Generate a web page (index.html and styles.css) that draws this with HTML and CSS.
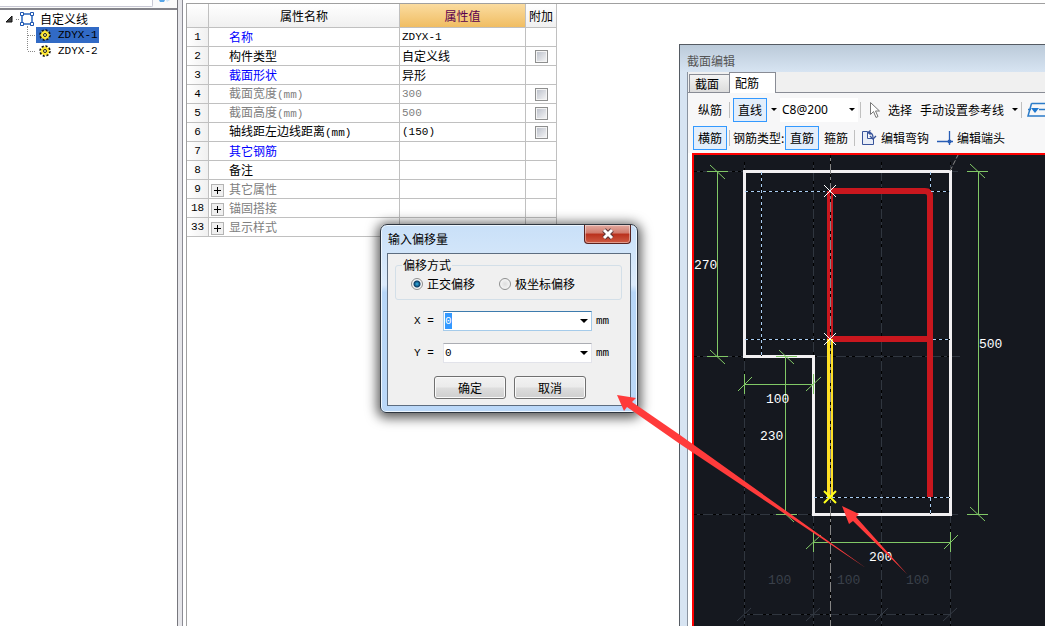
FILE: index.html
```html
<!DOCTYPE html>
<html lang="zh-CN">
<head>
<meta charset="utf-8">
<title>截面编辑</title>
<link rel="stylesheet" href="styles.css">
</head>
<body>
<main class="workspace">
  <aside class="tree-pane">
    <div class="search-strip">
      <div class="search-edge"></div>
      <svg class="search-icon" width="14" height="3" viewBox="0 0 14 3"><path d="M1 0h6l-1 2H2z" fill="#58a6e8"/><path d="M8 0h4L9 2z" fill="#cfe5f7"/></svg>
    </div>
    <ul class="tree">
      <li class="tree-root">
        <svg width="38" height="16" viewBox="0 0 38 16">
          <path d="M12 5v6H6z" fill="#444" stroke="#111"/>
          <path d="M16 8.500h4M27.500 16v-2" stroke="#888" stroke-dasharray="1 1"/>
          <path d="M22 3h10v10H22z" fill="#fff" stroke="#2865bd" stroke-width="1.500"/>
          <path d="M20.500 1.500h3v3h-3zM30.500 1.500h3v3h-3zM20.500 11.500h3v3h-3zM30.500 11.500h3v3h-3z" fill="#fff" stroke="#1c55b0"/>
        </svg>
        <span>自定义线</span>
      </li>
      <li class="tree-item">
        <svg width="9" height="16" viewBox="0 0 9 16"><path d="M.5 0v16M1 8.500h8" stroke="#888" stroke-dasharray="1 1"/></svg>
        <span class="tree-label selected">
          <svg width="12" height="12" viewBox="0 0 12 12"><circle cx="6" cy="6" r="4.500" fill="none" stroke="#111" stroke-width="2.500" stroke-dasharray="2 1.500"/><circle cx="6" cy="6" r="4" fill="#ffe832"/><path d="M6 1v10M1 6h10M2.500 2.500l7 7M9.500 2.500l-7 7" stroke="#ffe832"/><circle cx="6" cy="6" r="1.500" fill="#fff8a0" stroke="#222"/></svg>
          <span class="latin">ZDYX-1</span>
        </span>
      </li>
      <li class="tree-item">
        <svg width="9" height="16" viewBox="0 0 9 16"><path d="M.5 0v8M1 8.500h8" stroke="#888" stroke-dasharray="1 1"/></svg>
        <span class="tree-label">
          <svg width="12" height="12" viewBox="0 0 12 12"><circle cx="6" cy="6" r="4.500" fill="none" stroke="#111" stroke-width="2.500" stroke-dasharray="2 1.500"/><circle cx="6" cy="6" r="4" fill="#ffe832"/><path d="M6 1v10M1 6h10M2.500 2.500l7 7M9.500 2.500l-7 7" stroke="#ffe832"/><circle cx="6" cy="6" r="1.500" fill="#fff8a0" stroke="#222"/></svg>
          <span class="latin">ZDYX-2</span>
        </span>
      </li>
    </ul>
  </aside>
  <div class="splitter"></div>
  <section class="property-pane">
    <table class="props">
      <colgroup><col class="c-num"><col class="c-name"><col class="c-value"><col class="c-extra"></colgroup>
      <thead><tr><th></th><th>属性名称</th><th class="active">属性值</th><th>附加</th></tr></thead>
      <tbody>
        <tr><th>1</th><td class="name link">名称</td><td class="latin">ZDYX-1</td><td></td></tr>
        <tr><th>2</th><td class="name">构件类型</td><td>自定义线</td><td class="check"><input type="checkbox" aria-label="构件类型 附加"></td></tr>
        <tr><th>3</th><td class="name link">截面形状</td><td>异形</td><td></td></tr>
        <tr class="muted"><th>4</th><td class="name">截面宽度<span class="latin">(mm)</span></td><td class="latin">300</td><td class="check"><input type="checkbox" aria-label="截面宽度 附加"></td></tr>
        <tr class="muted"><th>5</th><td class="name">截面高度<span class="latin">(mm)</span></td><td class="latin">500</td><td class="check"><input type="checkbox" aria-label="截面高度 附加"></td></tr>
        <tr><th>6</th><td class="name">轴线距左边线距离<span class="latin">(mm)</span></td><td class="latin">(150)</td><td class="check"><input type="checkbox" aria-label="轴线距左边线距离 附加"></td></tr>
        <tr><th>7</th><td class="name link">其它钢筋</td><td></td><td></td></tr>
        <tr><th>8</th><td class="name">备注</td><td></td><td></td></tr>
        <tr class="muted"><th>9</th><td class="group"><button class="expand" aria-label="展开"></button>其它属性</td><td></td><td></td></tr>
        <tr class="muted"><th>18</th><td class="group"><button class="expand" aria-label="展开"></button>锚固搭接</td><td></td><td></td></tr>
        <tr class="muted"><th>33</th><td class="group"><button class="expand" aria-label="展开"></button>显示样式</td><td></td><td></td></tr>
      </tbody>
    </table>
  </section>
</main>

<section class="editor">
  <header class="editor-title">截面编辑</header>
  <div class="editor-body">
    <nav class="tabs"><button class="tab">截面</button><button class="tab current">配筋</button></nav>
    <div class="toolbars">
      <div class="toolbar">
        <button class="tool">纵筋</button>
        <i class="sep"></i>
        <button class="tool on">直线</button>
        <button class="drop" aria-label="直线选项"></button>
        <div class="spec"><input type="text" value="C8@200" aria-label="钢筋规格"><button class="drop" aria-label="规格列表"></button></div>
        <i class="sep"></i>
        <button class="tool pick">
          <svg width="12" height="18" viewBox="0 0 12 18"><path d="M1.500 1.500v12l3-3 2.500 6 2-1-2.500-5.500h4z" fill="#fff" stroke="#777"/></svg>选择</button>
        <button class="tool tight">手动设置参考线</button>
        <button class="drop" aria-label="参考线选项"></button>
        <i class="sep"></i>
        <svg class="edge-icon" width="20" height="16" viewBox="0 0 20 16"><path d="M4.500 1.500H18M4.500 1.500L1 14h17M1 7.500h3M12 7.500h6" fill="none" stroke="#2b7bc8" stroke-width="1.500"/><path d="M4 6h8l-4 5z" fill="#1e78d0"/></svg>
      </div>
      <div class="toolbar second">
        <button class="tool on">横筋</button>
        <i class="sep"></i>
        <span class="caption">钢筋类型:</span>
        <button class="tool on">直筋</button>
        <button class="tool tight">箍筋</button>
        <i class="sep"></i>
        <button class="tool with-icon">
          <svg width="16" height="16" viewBox="0 0 16 16"><path d="M1.500 1.500h5v7h6v6h-11z" fill="#e8edf7" stroke="#38549b"/><path d="M7 2.500c3 0 5 2 5 5M9.500 .5L7 2.500l2.500 2M9 6l3 3 3-3" fill="none" stroke="#38549b" stroke-width="1.300"/></svg>编辑弯钩</button>
        <button class="tool with-icon">
          <svg width="16" height="16" viewBox="0 0 16 16"><path d="M0 11.500h16M12.500 1v14" stroke="#285db5" stroke-width="1.300"/><circle cx="12.500" cy="11.500" r="2" fill="#285db5"/></svg>编辑端头</button>
      </div>
    </div>
    <div class="drawing">
      <svg class="cad" aria-label="截面配筋图">
        <g transform="translate(-694 -155)" fill="none">
          <path d="M744.500 162V626M813.500 162V626M881.500 162V626M950.500 162V626M694 171.500H958M694 356.500H960M694 514.500H958M744 614.500H950" stroke="#30363f"/>
          <path d="M744.500 162V626M813.500 162V626M881.500 162V626M950.500 162V626M694 171.500H958M694 356.500H960M694 514.500H958M744 614.500H950" stroke="#000" stroke-dasharray="3 3 3 10"/>
          <path d="M737 621l14-13M806 621l14-13M875 621l13-13M943 621l14-13" stroke="#353b45"/>
          <path d="M744.500 171.500H950.500V514.500H813.500V356.500H744.500Z" stroke="#f2f0f2" stroke-width="3"/>
          <g stroke="#81c866">
            <path d="M717.500 171V356M707 171.500h21M707 356.500h21M710 165l15 14M710 350l15 14"/>
            <path d="M785.500 356V514M776 356.500h21M776 514.500h21M779 350l15 14M779 508l15 14"/>
            <path d="M978.500 171V514M967 171.500h21M967 514.500h21M970 164l15 14M970 507l15 14"/>
            <path d="M744 384.500h70M744.500 374v20M813.500 374v20M738 391l14-14M806 391l15-14"/>
            <path d="M813 542.500h138M813.500 532v20M950.500 532v20M806 549l15-14M944 549l14-14"/>
          </g>
          <path d="M830 191V339" stroke="#c9171e" stroke-width="6"/>
          <path d="M830 191H925Q930 191 930 196V497M830 339H930" stroke="#c9171e" stroke-width="6"/>
          <path d="M830 339V497" stroke="#ffdf24" stroke-width="6"/>
          <path d="M830.500 155V626" stroke="#858585"/>
          <path d="M830.500 155V626" stroke="#000" stroke-dasharray="3 3 3 10"/>
          <path d="M950 171l8-16" stroke="#888" stroke-dasharray="5 2"/>
          <path d="M761.500 172V356M745 191.500H825M745 339.500H825M933 339.500H950M931 191.500H950M930.500 172V190M814 497.500H950M930.500 498V514" stroke="#000"/>
          <path d="M761.500 172V356M745 191.500H825M745 339.500H825M933 339.500H950M931 191.500H950M930.500 172V190M814 497.500H950M930.500 498V514" stroke="#a9cdf2" stroke-dasharray="3 3"/>
          <path d="M824 185l12 12M836 185l-12 12M824 333l12 12M836 333l-12 12" stroke="#fff"/>
          <path d="M824 491l12 12M836 491l-12 12" stroke="#ffff1a" stroke-width="2"/>
          <g class="dims">
            <text x="694" y="269">270</text><text x="979" y="348">500</text>
            <text x="766" y="403">100</text><text x="760" y="440">230</text><text x="869" y="561">200</text>
          </g>
          <g class="dims faint">
            <text x="768" y="584">100</text><text x="837" y="584">100</text><text x="906" y="584">100</text>
          </g>
        </g>
      </svg>
    </div>
  </div>
</section>

<form class="dialog">
  <header class="dialog-title">
    <span>输入偏移量</span>
    <button type="button" class="close" aria-label="关闭"><svg width="14" height="12" viewBox="0 0 14 12"><path d="M3 2l8 8M11 2l-8 8" stroke="#5c3638" stroke-width="5"/><path d="M3 2l8 8M11 2l-8 8" stroke="#fff" stroke-width="3"/></svg></button>
  </header>
  <div class="dialog-body">
    <fieldset class="mode">
      <legend>偏移方式</legend>
      <label><input type="radio" name="mode" checked>正交偏移</label>
      <label><input type="radio" name="mode">极坐标偏移</label>
    </fieldset>
    <div class="field">
      <label class="latin" for="dx">X =</label>
      <div class="combo focused"><input id="dx" type="text" value="0"><button type="button" class="drop" aria-label="X 列表"></button></div>
      <span class="latin">mm</span>
    </div>
    <div class="field">
      <label class="latin" for="dy">Y =</label>
      <div class="combo"><input id="dy" type="text" value="0"><button type="button" class="drop" aria-label="Y 列表"></button></div>
      <span class="latin">mm</span>
    </div>
    <div class="actions"><button type="button">确定</button><button type="button">取消</button></div>
  </div>
</form>

<svg class="arrows" aria-hidden="true">
  <path d="M617 395L636 398L632 402L680 435L866 568L680 444L627 407L624 411Z" fill="#ff3b3b"/>
  <path d="M842 506L859 514L856 517L907 574L853 521L849 524Z" fill="#ff3b3b"/>
</svg>
<script src="app.js"></script>
</body>
</html>
```
FILE: styles.css
```css
* { box-sizing: border-box; }

body {
  margin: 0;
  height: 100vh;
  position: relative;
  overflow: hidden;
  background: #fff;
  color: #000;
  font: 12px/16px "Noto Sans CJK SC", sans-serif;
}

button, input {
  font: inherit;
  color: inherit;
  margin: 0;
  padding: 0;
  border: 0;
  background: none;
}

svg { display: block; flex: none; }

.latin { font-family: "Liberation Mono", monospace; font-size: 11px; }

/* Component tree and property grid */
.workspace { display: flex; height: 100%; }

.tree-pane {
  width: 178px;
  flex: none;
  border-right: 1px solid #77777d;
}

.search-strip {
  display: flex;
  gap: 5px;
  height: 10px;
  border-bottom: 2px solid #84848a;
  background: #fafafa;
}

.search-edge {
  width: 153px;
  height: 7px;
  border: solid #c8c8d4;
  border-width: 0 1px 1px 0;
  border-radius: 0 0 2px 0;
  background: #fff;
}

.tree { margin: 1px 0 0; padding: 0; list-style: none; }
.tree-root, .tree-item { display: flex; align-items: center; height: 16px; }
.tree-root { gap: 2px; }
.tree-item { padding-left: 27px; }
.tree-label { display: flex; align-items: center; gap: 7px; height: 16px; padding: 0 1px 0 3px; }
.selected { background: #316ac5; }

.splitter {
  width: 5px;
  flex: none;
  background: #e6e6ea;
  border-right: 1px solid #8c8c94;
}

.property-pane {
  flex: 1;
  margin: 3px 0 0 3px;
  border: solid #a0a0a0;
  border-width: 1px 0 0 1px;
}

.props { width: 370px; table-layout: fixed; border-collapse: separate; border-spacing: 0; }
.c-num { width: 22px; }
.c-name { width: 191px; }
.c-value { width: 126px; }
.c-extra { width: 31px; }

.props th, .props td {
  height: 19px;
  padding: 0 2px;
  border: solid #c0c0c0;
  border-width: 0 1px 1px 0;
  font-weight: normal;
  line-height: 16px;
  text-align: left;
  white-space: nowrap;
}
.props th { background: linear-gradient(90deg, #fff, #f0f0f0); text-align: center; padding: 0; }
.props tbody th { font: 11px/16px "Liberation Mono", monospace; color: #000; }
.props thead th { height: 24px; background: linear-gradient(#fff, #f0f0f0); }
.props thead .active { background: linear-gradient(#fbdca0, #f0bd62); color: #5a004e; }
.props .name { padding-left: 20px; }
.props .link { color: #00f; }
.props .muted { color: #808080; }
.props .check { text-align: center; padding: 0; }

.check input {
  appearance: none;
  display: block;
  width: 13px;
  height: 13px;
  margin: 0 auto;
  border: 1px solid #8e8f8f;
  background: linear-gradient(135deg, #b8bdc8, #f8f8f8);
  box-shadow: inset 0 0 0 1px #f4f4f4;
}

.expand {
  width: 13px;
  height: 13px;
  margin-right: 5px;
  vertical-align: -2px;
  border: 1px solid #b4b4b4;
  background:
    linear-gradient(#000, #000) center / 7px 1px no-repeat,
    linear-gradient(#000, #000) center / 1px 7px no-repeat,
    #f0f0f0;
}

/* Section editor window */
.editor {
  position: absolute;
  left: 679px;
  top: 44px;
  right: 0;
  bottom: 0;
  display: flex;
  flex-direction: column;
  border: solid #555b63;
  border-width: 1px 0 0 1px;
  background: #d7e4f2;
}

.editor-title {
  height: 27px;
  padding: 8px 7px 0;
  background: linear-gradient(#bbcad9, #d7e4f2);
  color: #555;
}

.editor-body {
  flex: 1;
  display: flex;
  flex-direction: column;
  margin-left: 7px;
  border-left: 1px solid #8a93a0;
  background: #fff;
}

.tabs {
  display: flex;
  align-items: flex-end;
  height: 21px;
  padding-left: 1px;
  background: #f0f0f0;
  border-bottom: 1px solid #898c95;
}
.tab {
  width: 40px;
  height: 18px;
  padding-left: 5px;
  border: solid #898c95;
  border-width: 1px 0 0 1px;
  background: linear-gradient(#f4f4f4, #dcdcdc);
  text-align: left;
}
.current { width: 47px; height: 21px; border-width: 1px 1px 0; background: #fff; margin-bottom: -1px; }

.toolbars { padding: 2px 0 0 5px; background: #f7f7f8; }
.toolbar { display: flex; align-items: center; height: 29px; gap: 2px; overflow: hidden; }
.second { padding-bottom: 1px; }

.tool { flex: none; height: 24px; padding: 0 4px; border: 1px solid transparent; white-space: nowrap; }
.tool.on { border-color: #3399ff; background: #e3eefb; }
.pick, .with-icon { display: flex; align-items: center; gap: 4px; }
.tool.pick { gap: 7px; padding-right: 2px; }
.tool.tight { padding: 0 3px 0 2px; }
.tool.with-icon { padding: 0 2px; }
.caption { flex: none; width: 50px; white-space: nowrap; }
.sep { flex: none; width: 1px; height: 16px; background: #c0c0c0; }
.toolbar .sep { margin-right: 1px; }

.drop { flex: none; width: 9px; height: 16px; display: grid; place-items: center; }
.drop::after {
  content: "";
  border: solid transparent;
  border-width: 3px 3px 0;
  border-top-color: #000;
}

.spec { flex: none; display: flex; align-items: center; width: 78px; height: 24px; padding: 0 2px; background: #fff; }
.spec input { flex: 1; min-width: 0; font-family: "Noto Sans", sans-serif; }
.edge-icon { margin-left: 2px; }

.drawing {
  flex: 1;
  margin-left: 4px;
  border: solid #f00;
  border-width: 2px 0 0 2px;
  background: #15181f;
  position: relative;
  overflow: hidden;
}
.cad { position: absolute; width: 100%; height: 100%; }
.dims { fill: #fff; font: 13px "Liberation Mono", monospace; }
.faint { fill: #3a404a; }

/* Offset dialog */
.dialog {
  position: absolute;
  left: 380px;
  top: 224px;
  width: 258px;
  padding: 0 6px 6px;
  border: 1px solid #2e3640;
  border-radius: 7px 7px 6px 6px;
  background: linear-gradient(#c9e0f8, #dcebfb 32%, #b7d6f7 36%, #bbd8f8);
  box-shadow: inset 0 0 0 1px #eef7ff, 0 2px 12px 3px rgba(0, 0, 0, .65);
}

.dialog-title { display: flex; justify-content: space-between; align-items: center; height: 28px; padding-left: 1px; }
.close {
  align-self: flex-start;
  display: grid;
  place-items: center;
  width: 47px;
  height: 19px;
  border: 1px solid #5a2320;
  border-top: 0;
  border-radius: 0 0 4px 4px;
  background: linear-gradient(#e3aaa0, #d07a6c 45%, #b9301c 50%, #cf5c45);
  box-shadow: inset 0 0 0 1px rgba(255, 255, 255, .4);
}

.dialog-body {
  padding: 3px 8px 6px 7px;
  border: 1px solid #5d6d80;
  background: #f0f0f0;
}

.mode {
  display: flex;
  gap: 24px;
  height: 43px;
  margin: 0 0 11px;
  padding: 2px 15px 0;
  border: 1px solid #d3dfe8;
  border-radius: 3px;
}
.mode legend { margin-left: -9px; padding: 0 1px; line-height: 16px; }
.mode label { display: flex; align-items: center; gap: 4px; height: 18px; }
.mode input {
  appearance: none;
  width: 12px;
  height: 12px;
  border: 1px solid #8e8f8f;
  border-radius: 50%;
  background: radial-gradient(circle, #ddd, #fff);
}
.mode input:checked { background: radial-gradient(circle, #34b4e8 0, #0b3c64 3px, #f4f4f4 4px); }

.field { display: flex; align-items: center; height: 20px; margin: 0 0 12px 19px; }
.field label { width: 29px; white-space: pre; }
.combo {
  display: flex;
  align-items: center;
  width: 149px;
  height: 20px;
  margin-right: 4px;
  padding: 0 3px 0 1px;
  border: 1px solid #e2e3ea;
  border-top-color: #abadb3;
  background: #fff;
}
.combo.focused { border-color: #a5cbea; border-top-color: #3d7bad; }
.combo input { flex: 1; min-width: 0; outline: 0; caret-color: transparent; font: 11px/16px "Liberation Mono", monospace; }
.combo input::selection { background: #3399ff; color: #fff; }
.combo .drop::after { border-width: 4px 4px 0; }

.actions { display: flex; gap: 8px; margin: 13px 0 0 39px; }
.actions button {
  width: 72px;
  height: 23px;
  border: 1px solid #707070;
  border-radius: 3px;
  background: linear-gradient(#f2f2f2, #ebebeb 48%, #dddddd 52%, #cfcfcf);
  box-shadow: inset 0 0 0 1px #fafafa;
}

.arrows { position: absolute; inset: 0; width: 100%; height: 100%; pointer-events: none; }
```
FILE: app.js
```js
const offsetX = document.getElementById("dx");
offsetX.focus();
offsetX.select();
```
